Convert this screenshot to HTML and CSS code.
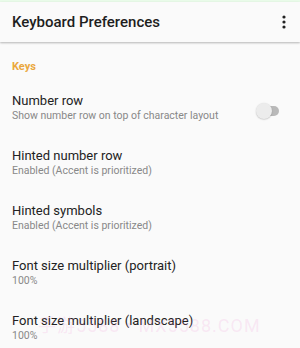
FILE: index.html
```html
<!DOCTYPE html>
<html>
<head>
<meta charset="utf-8">
<link rel="stylesheet" href="styles.css">
</head>
<body>
<div class="screen">
  <div class="status"></div>
  <header class="appbar">
    <h1 class="title">Keyboard Preferences</h1>
    <svg class="menu" width="4" height="14" viewBox="0 0 4 14"><circle cx="2" cy="2" r="1.6" fill="#222"/><circle cx="2" cy="7" r="1.6" fill="#222"/><circle cx="2" cy="12" r="1.6" fill="#222"/></svg>
  </header>
  <main class="content">
    <div class="section">Keys</div>
    <div class="row">
      <div class="texts">
        <div class="r-title">Number row</div>
        <div class="r-sub">Show number row on top of character layout</div>
      </div>
      <div class="switch"><span class="track"></span><span class="thumb"></span></div>
    </div>
    <div class="row">
      <div class="texts">
        <div class="r-title">Hinted number row</div>
        <div class="r-sub">Enabled (Accent is prioritized)</div>
      </div>
    </div>
    <div class="row">
      <div class="texts">
        <div class="r-title">Hinted symbols</div>
        <div class="r-sub">Enabled (Accent is prioritized)</div>
      </div>
    </div>
    <div class="row">
      <div class="texts">
        <div class="r-title">Font size multiplier (portrait)</div>
        <div class="r-sub">100%</div>
      </div>
    </div>
    <div class="row">
      <div class="texts">
        <div class="r-title">Font size multiplier (landscape)</div>
        <div class="r-sub">100%</div>
      </div>
    </div>
  </main>
  <div class="watermark">手游5588 • MX5588.COM</div>
</div>
</body>
</html>
```
FILE: styles.css
```css
html, body {
  margin: 0;
  padding: 0;
  background: #fafafa;
}
.screen {
  position: relative;
  width: 300px;
  height: 348px;
  overflow: hidden;
  font-family: Roboto, "Noto Sans CJK SC", sans-serif;
  background: #fafafa;
}
.status {
  height: 2px;
  background: #e9fbe9;
}
.appbar {
  height: 40px;
  display: flex;
  align-items: center;
  justify-content: space-between;
  padding: 0 14px 0 12px;
  background: #fafafa;
  box-shadow: 0 1px 2px rgba(0,0,0,0.28);
  position: relative;
  z-index: 1;
}
.title {
  margin: 0;
  font-size: 15px;
  font-weight: 500;
  color: #1e1e1e;
  line-height: 20px;
}
.menu {
  display: block;
}
.content {
  padding-top: 18px;
}
.section {
  padding-left: 12px;
  font-size: 11px;
  font-weight: 700;
  line-height: 14px;
  color: #eaa83e;
  margin-bottom: 6.3px;
}
.row {
  height: 55px;
  display: flex;
  align-items: center;
  justify-content: space-between;
  padding: 0 20px 0 12px;
}
.texts {
  display: flex;
  flex-direction: column;
}
.r-title {
  font-size: 13px;
  line-height: 16px;
  color: #222222;
}
.r-sub {
  font-size: 10.5px;
  line-height: 14px;
  color: #888888;
}
.switch {
  position: relative;
  width: 24px;
  height: 16px;
  margin-top: 6px;
}
.track {
  position: absolute;
  left: 5px;
  top: 3px;
  width: 18px;
  height: 10px;
  border-radius: 5px;
  background: #b9b9b9;
}
.thumb {
  position: absolute;
  left: 0;
  top: 0;
  width: 16px;
  height: 16px;
  border-radius: 50%;
  background: #ececec;
  box-shadow: 0 0.5px 1.5px rgba(0,0,0,0.25);
}
.watermark {
  position: absolute;
  left: 38px;
  top: 316px;
  font-size: 18px;
  letter-spacing: 1px;
  line-height: 20px;
  color: rgba(240, 140, 210, 0.18);
  white-space: nowrap;
  pointer-events: none;
}
```
